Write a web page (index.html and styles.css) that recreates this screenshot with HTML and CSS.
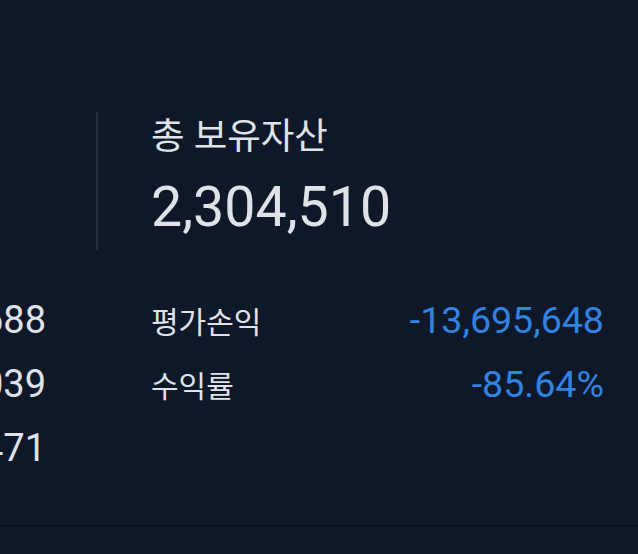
FILE: index.html
```html
<!DOCTYPE html>
<html lang="ko">
<head>
<meta charset="utf-8">
<title>보유자산</title>
<link rel="stylesheet" href="styles.css">
</head>
<body>
<main class="assets">
  <section class="head">
    <div class="head-side"></div>
    <div class="total">
      <div class="total-label">총 보유자산</div>
      <div class="total-value">2,304,510</div>
    </div>
  </section>
  <section class="rows">
    <div class="side-col">
      <div class="side-val"><span>15,990,688</span></div>
      <div class="side-val"><span>2,304,039</span></div>
      <div class="side-val"><span>2,304,471</span></div>
    </div>
    <div class="main-col">
      <div class="row">
        <span class="row-label">평가손익</span>
        <span class="row-value minus">-13,695,648</span>
      </div>
      <div class="row">
        <span class="row-label">수익률</span>
        <span class="row-value minus">-85.64%</span>
      </div>
    </div>
  </section>
  <hr class="rule">
</main>
</body>
</html>
```

FILE: styles.css
```css
html, body {
  margin: 0;
  padding: 0;
}

body {
  background: #0e1829;
  color: #dfe2e7;
  font-family: Roboto, "Noto Sans CJK KR", sans-serif;
  width: 638px;
  height: 554px;
  overflow: hidden;
}

.assets {
  padding-top: 112px;
}

.head {
  display: flex;
  height: 138px;
}

.head-side {
  width: 96px;
  border-right: 2px solid #27313f;
}

.total {
  padding-left: 53px;
  padding-top: 5px;
}

.total-label {
  font-size: 36.5px;
  line-height: 40px;
}

.total-value {
  margin-top: 19px;
  font-size: 55.5px;
  line-height: 64px;
}

.rows {
  display: flex;
  margin-top: 38px;
}

.side-col {
  width: 46px;
  flex: none;
}

.side-val {
  display: flex;
  justify-content: flex-end;
  white-space: nowrap;
  font-size: 38px;
  line-height: 64px;
  height: 64px;
}

.main-col {
  flex: 1;
  padding-left: 105px;
  padding-right: 34px;
}

.row {
  display: flex;
  justify-content: space-between;
  align-items: baseline;
  height: 64px;
  line-height: 64px;
}

.row-label {
  font-size: 30px;
}

.row-value {
  font-size: 37.6px;
}

.minus {
  color: #3282e0;
}

.rule {
  margin: 45px 0 0;
  border: 0;
  height: 2px;
  background: #060f1e;
}
```
